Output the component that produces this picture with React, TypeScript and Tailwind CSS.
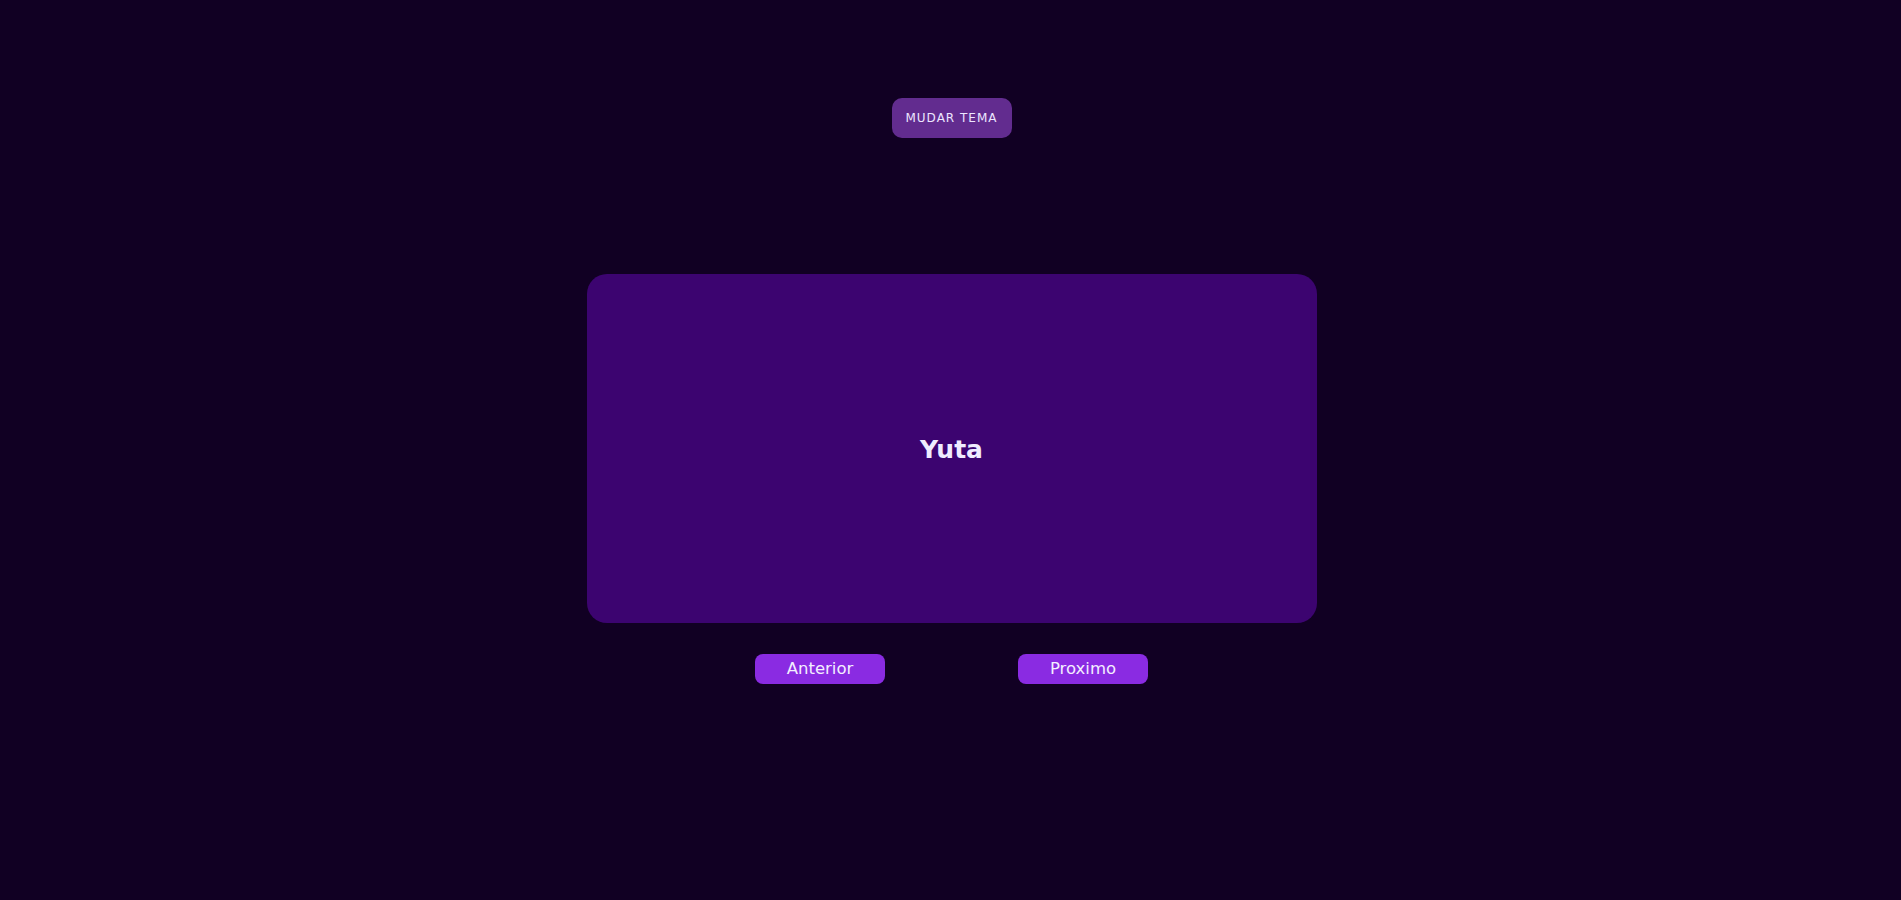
import React, { useState } from "react";

const names = ["Yuta", "Gojo", "Megumi", "Nobara"];

const App = () => {
  const [index, setIndex] = useState(0);

  return (
    <main
      className="min-h-[900px] w-full bg-[#110023] flex flex-col items-center pt-[98px]"
      style={{ fontFamily: '"DejaVu Sans", Verdana, sans-serif' }}
    >
      {/* theme toggle */}
      <button className="h-[40px] w-[120px] ml-[2px] rounded-[10px] bg-[#622c8f] text-[#ece6ff] text-[12px] tracking-[1px] uppercase">
        Mudar tema
      </button>

      {/* card */}
      <section className="mt-[136px] ml-[2px] w-[730px] h-[349px] rounded-[20px] bg-[#3c0470] flex items-center justify-center">
        <h2 className="mt-[2px] text-[25px] font-bold text-[#f0ecff]">{names[index]}</h2>
      </section>

      {/* nav */}
      <div className="mt-[31px] ml-[2px] flex gap-[133px]">
        <button
          onClick={() => setIndex((index - 1 + names.length) % names.length)}
          className="h-[30px] w-[130px] rounded-[8px] bg-[#8a2be2] text-[#f3efff] text-[16.5px]"
        >
          Anterior
        </button>
        <button
          onClick={() => setIndex((index + 1) % names.length)}
          className="h-[30px] w-[130px] rounded-[8px] bg-[#8a2be2] text-[#f3efff] text-[16.5px]"
        >
          Proximo
        </button>
      </div>
    </main>
  );
};

export default App;
